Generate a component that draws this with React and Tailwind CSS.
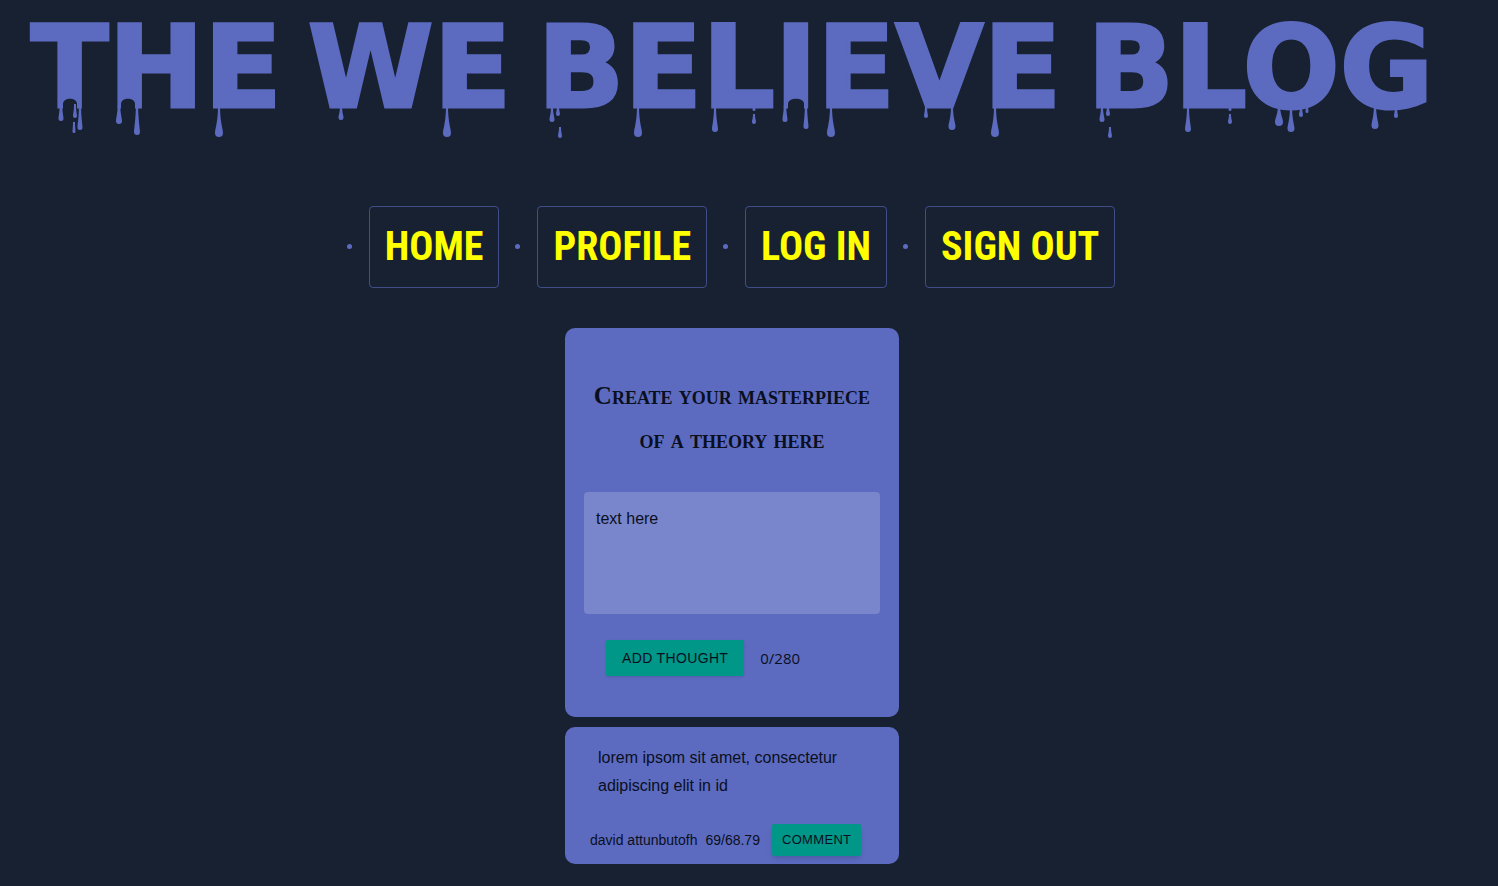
const titleWords = ["THE", "WE", "BELIEVE", "BLOG"];

const navItems = ["HOME", "PROFILE", "LOG IN", "SIGN OUT"];

// Each drip: centre x, top, bottom, bulb radius
const drips = [
  [61, 100, 121, 2.5], [75, 104, 118, 2], [80, 102, 130, 2.5], [74, 122, 133, 1.5],
  [119, 100, 124, 3], [137, 100, 135, 3], [219, 106, 137, 4],
  [341, 106, 120, 2.5], [447, 106, 137, 4],
  [552, 106, 122, 2.5], [558, 106, 116, 2], [560, 127, 138, 2],
  [638, 106, 137, 4], [715, 106, 132, 3], [754, 106, 111, 1.5], [754, 114, 124, 2],
  [785, 100, 122, 2.5], [806, 100, 129, 2.5], [831, 106, 137, 4],
  [926, 106, 118, 2], [952, 106, 130, 3.5], [995, 106, 137, 4],
  [1102, 106, 122, 2.5], [1108, 106, 116, 2], [1110, 127, 138, 2],
  [1188, 106, 132, 3], [1230, 106, 111, 1.5], [1230, 114, 124, 2],
  [1279, 104, 126, 4], [1291, 106, 132, 3.5], [1301, 106, 117, 2], [1307, 104, 113, 1.5],
  [1375, 104, 129, 3.5], [1396, 106, 118, 2],
];

// Hollows melted out of a letter's foot: centre x, half width
const hollows = [[70, 7], [128, 7], [796, 8]];

function dripPath([x, top, bottom, r]) {
  const c = bottom - r;
  const mid = top + (c - top) * 0.6;
  return `M${x - 1} ${top}C${x - 1} ${mid} ${x - r} ${c - r} ${x - r} ${c}A${r} ${r} 0 0 0 ${x + r} ${c}C${x + r} ${c - r} ${x + 1} ${mid} ${x + 1} ${top}Z`;
}

function hollowPath([x, w]) {
  return `M${x - w} 111V104C${x - w} 97 ${x + w} 97 ${x + w} 104V111Z`;
}

function Title() {
  return (
    <header className="relative pt-[18px]">
      <h1 className="flex h-[100px] items-center justify-center gap-[26px] font-['DejaVu_Sans',sans-serif] text-[114px] leading-[100px] font-bold whitespace-nowrap text-[#5c6bc0] [-webkit-text-stroke:3px_#5c6bc0]">
        {titleWords.map((word) => (
          <span key={word}>{word} </span>
        ))}
      </h1>
      <svg
        viewBox="0 0 1464 140"
        className="pointer-events-none absolute top-0 left-0 w-full fill-[#5c6bc0]"
        aria-hidden="true"
      >
        {hollows.map((h) => (
          <path key={h[0]} d={hollowPath(h)} className="fill-[#172132]" />
        ))}
        {drips.map((d) => (
          <path key={`${d[0]}-${d[1]}`} d={dripPath(d)} />
        ))}
      </svg>
    </header>
  );
}

function Nav() {
  return (
    <nav className="mt-[88px] pl-5">
      <ul className="flex justify-center gap-[38px]">
        {navItems.map((item) => (
          <li key={item} className="relative">
            <span className="absolute top-[38px] -left-[22px] size-[5px] rounded-full bg-[#5c6bc0]" />
            <a
              href="#"
              className="block rounded border border-[#5c6bc0]/60 px-[15px] font-['Roboto_Condensed','Liberation_Serif',serif] text-[40px] leading-[80px] font-bold text-[#ffff00]"
            >
              {item}
            </a>
          </li>
        ))}
      </ul>
    </nav>
  );
}

function ThoughtForm() {
  return (
    <form className="rounded-[10px] bg-[#5c6bc0] px-[19px] pt-[46px] pb-[41px]">
      <h2 className="text-center font-['Liberation_Serif',serif] text-[25px] leading-[44px] font-bold [font-variant:small-caps]">
        Create your masterpiece of a theory here
      </h2>
      <textarea
        aria-label="Your theory"
        placeholder="text here"
        className="mt-[30px] block h-[122px] w-full resize-none rounded bg-[#7986cb] px-3 py-[15px] text-base leading-6 placeholder:text-[#0a0f1e] focus:outline-none"
      />
      <div className="mt-[26px] flex items-center gap-4 pl-[22px]">
        <button
          type="button"
          className="h-[36px] rounded-xs bg-[#009688] px-4 text-sm tracking-wide shadow"
        >
          ADD THOUGHT
        </button>
        <span className="font-['Open_Sans',sans-serif] text-[15px]">0/280</span>
      </div>
    </form>
  );
}

function ThoughtCard() {
  return (
    <article className="mt-[10px] rounded-[10px] bg-[#5c6bc0] pt-[17px] pb-2 pl-[25px]">
      <p className="px-2 text-base leading-7">
        lorem ipsom sit amet, consectetur adipiscing elit in id
      </p>
      <div className="mt-6 flex items-center text-sm">
        <span>david attunbutofh</span>
        <span className="ml-2">69/68.79</span>
        <button
          type="button"
          className="ml-3 h-[32px] rounded-xs bg-[#009688] px-[10px] text-[13px] tracking-wide shadow-md"
        >
          COMMENT
        </button>
      </div>
    </article>
  );
}

export default function App() {
  return (
    <div className="min-h-screen bg-[#172132] pr-[34px] pb-[22px] font-['Liberation_Sans',Arial,sans-serif] text-[#0a0f1e]">
      <Title />
      <Nav />
      <main className="mx-auto mt-10 w-full max-w-[334px]">
        <ThoughtForm />
        <ThoughtCard />
      </main>
    </div>
  );
}
